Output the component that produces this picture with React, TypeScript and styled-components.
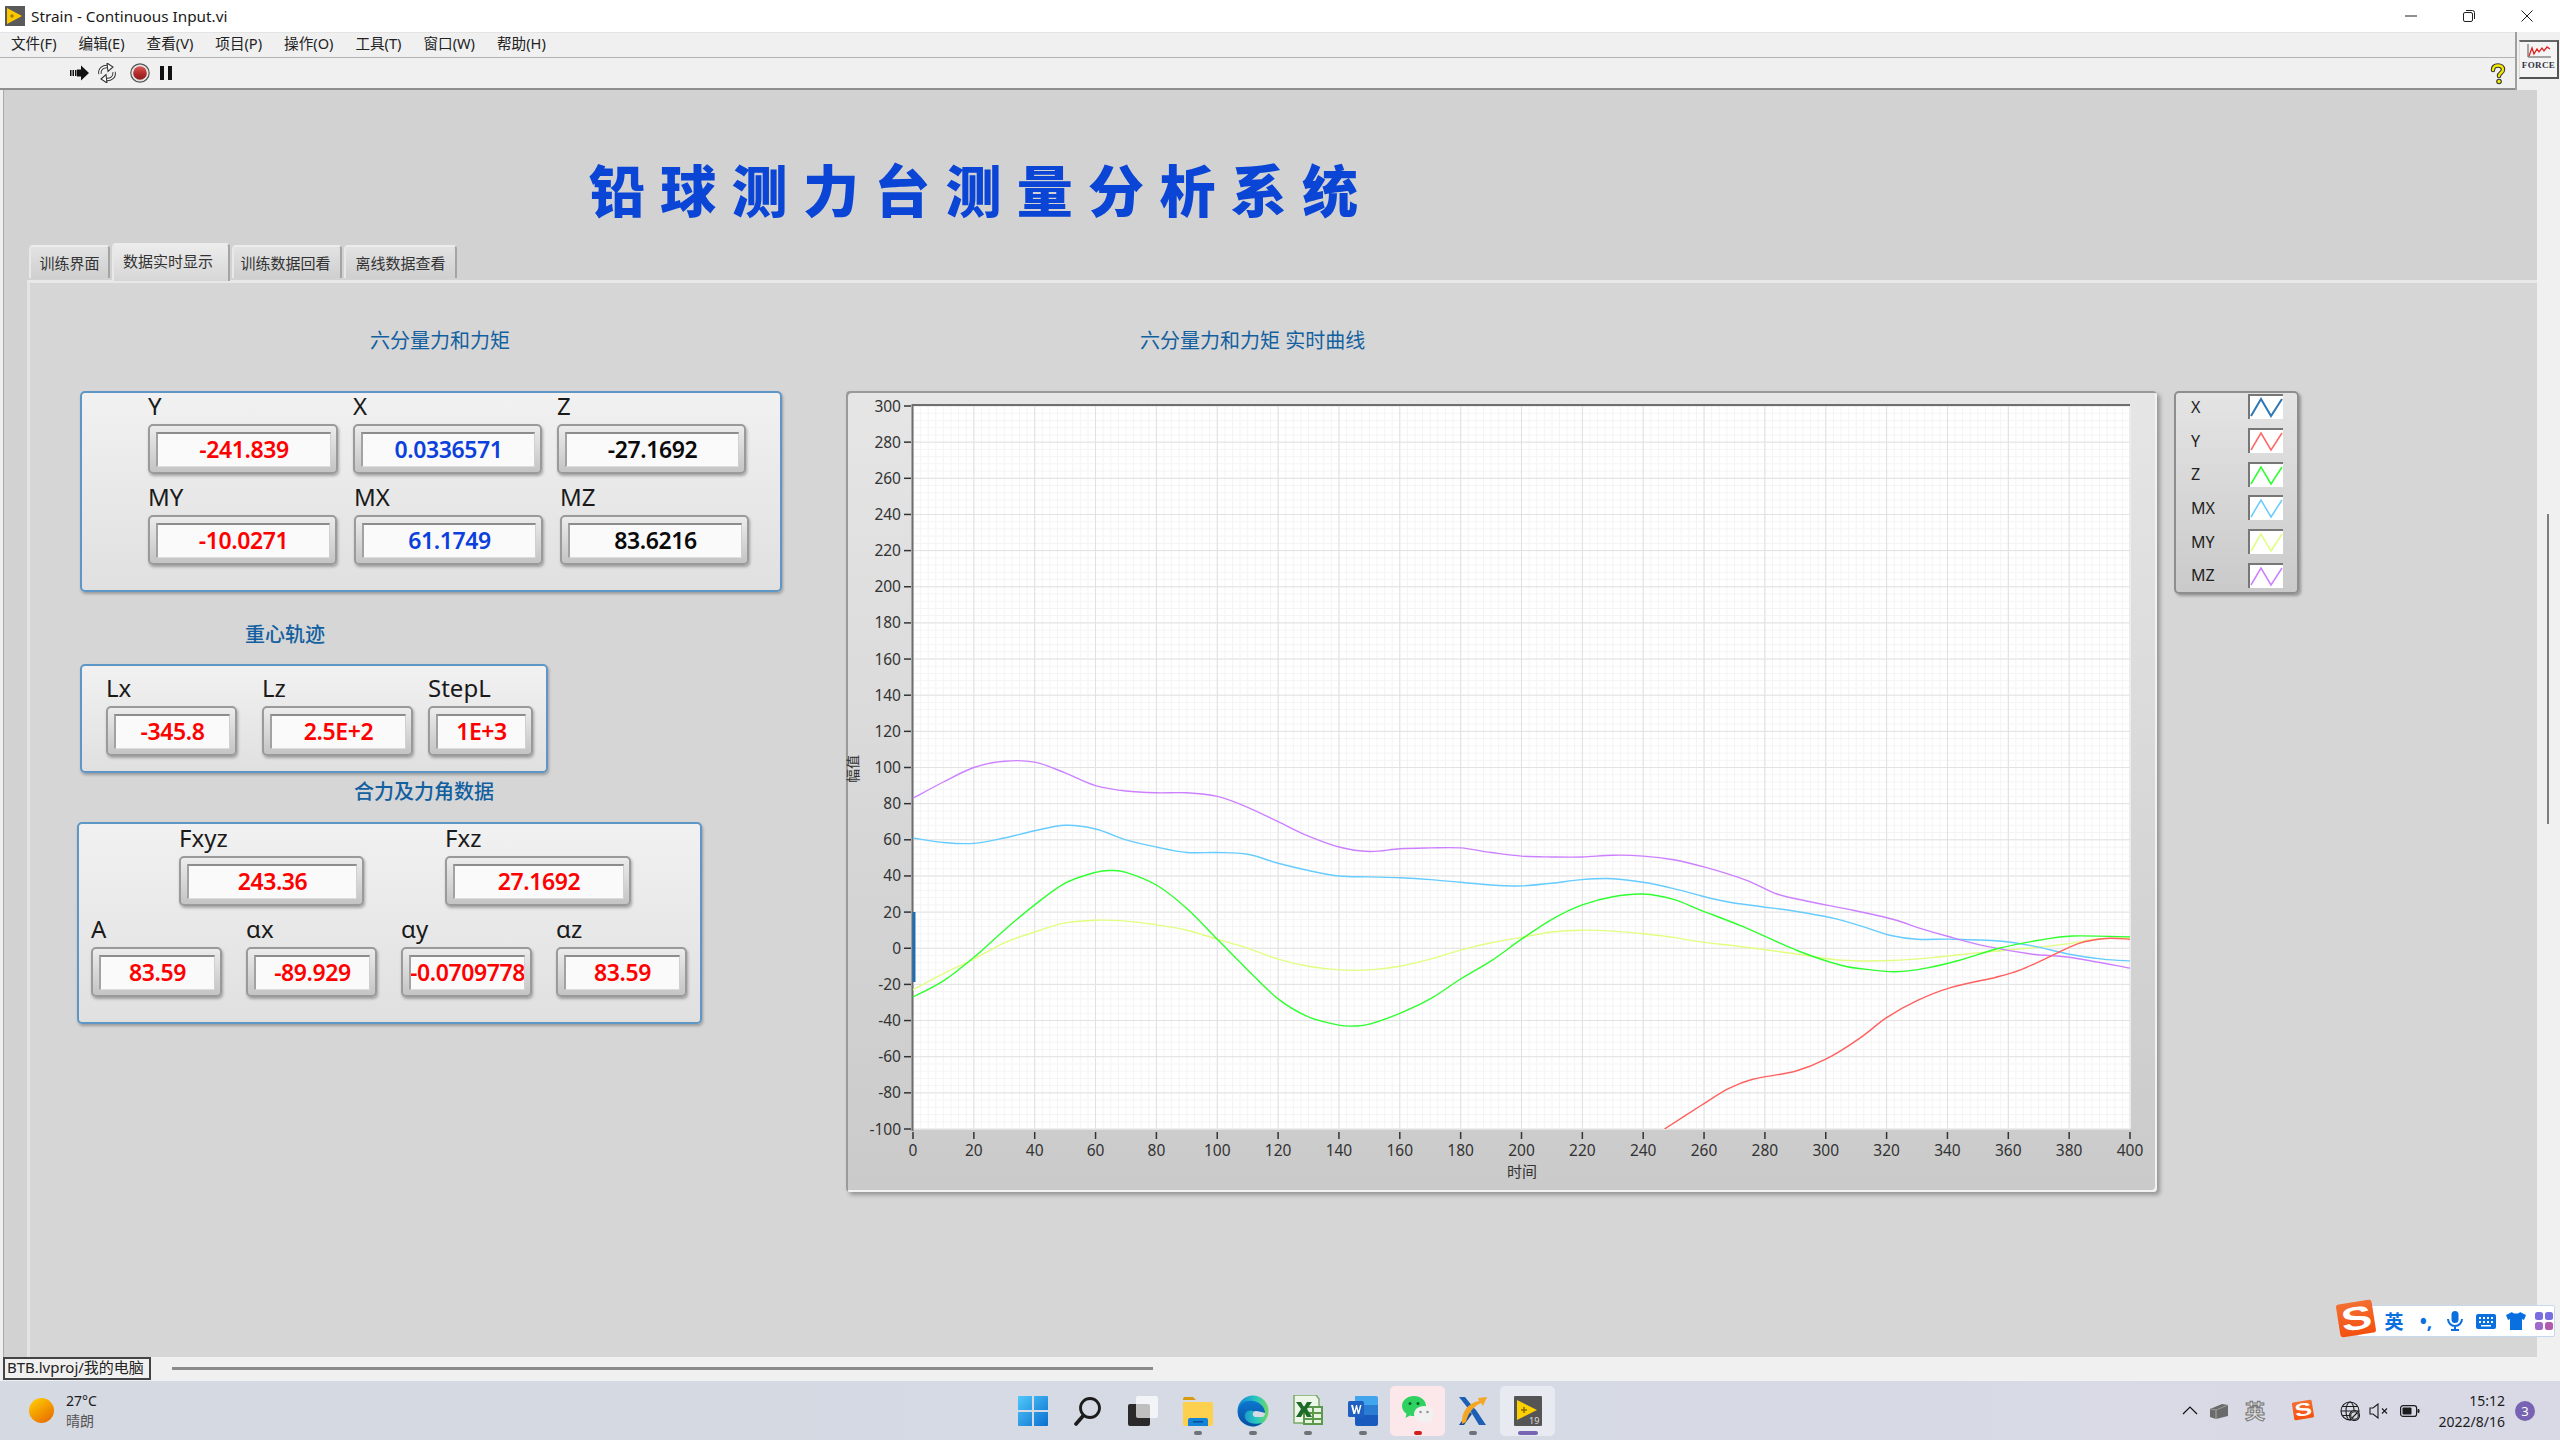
import React from 'react'
import styled, { createGlobalStyle } from 'styled-components'

const GlobalStyle = createGlobalStyle`
  html, body {
    margin: 0;
    padding: 0;
    background: #f0f0f0;
  }
  body {
    font-family: "Noto Sans", "Noto Sans CJK SC", sans-serif;
    color: #111;
  }
  * {
    box-sizing: border-box;
  }
`

const Screen = styled.div`
  width: 2560px;
  height: 1440px;
  position: relative;
  display: flex;
  flex-direction: column;
  overflow: hidden;
`

/* window chrome */

const TitleBar = styled.div`
  height: 32px;
  flex: none;
  display: flex;
  align-items: center;
  padding-left: 5px;
  background: #fff;
`

const TitleText = styled.div`
  margin-left: 6px;
  font-size: 15.3px;
  color: #1a1a1a;
`

const WindowButtons = styled.div`
  margin-left: auto;
  display: flex;
  padding-right: 4px;
`

const WindowButton = styled.div`
  width: 58px;
  height: 28px;
  display: flex;
  align-items: center;
  justify-content: center;
`

const MenuBar = styled.div`
  height: 26px;
  flex: none;
  display: flex;
  align-items: center;
  gap: 22px;
  padding: 0 0 6px 11px;
  background: #f0f0f0;
  border-bottom: 1px solid #b4b4b4;
  border-top: 1px solid #e4e4e4;
  position: relative;
`

const MenuItem = styled.span`
  font-size: 14.6px;
  color: #222;
`

const ToolBar = styled.div`
  height: 32px;
  flex: none;
  display: flex;
  align-items: center;
  padding-left: 70px;
  gap: 8px;
  background: #f0f0f0;
  border-bottom: 2px solid #8e8e8e;
`

const ToolIcon = styled.svg`
  display: block;
  flex: none;
`

const HelpMark = styled.svg`
  margin-left: auto;
  margin-right: 53px;
  margin-top: 2px;
  flex: none;
`

const ForceBox = styled.div`
  position: absolute;
  left: 2515px;
  top: 32px;
  width: 45px;
  height: 58px;
  background: #f0f0f0;
  border-left: 2px solid #a0a0a0;
  padding: 8px 3px 0 2px;
`

const ForceFrame = styled.div`
  width: 40px;
  height: 39px;
  border: 1px solid #ddd;
  border-right: 2px solid #555;
  border-bottom: 2px solid #555;
  border-top: 2px solid #666;
  background: #f4f4f4;
  display: flex;
  flex-direction: column;
  align-items: center;
`

const ForceText = styled.span`
  font-family: "Liberation Serif", serif;
  font-weight: 700;
  font-size: 9px;
  letter-spacing: 0.4px;
  line-height: 11px;
  color: #334;
`

/* front panel */

const Workspace = styled.div`
  flex: 1;
  min-height: 0;
  display: flex;
`

const FrontPanel = styled.div`
  flex: 1;
  min-width: 0;
  margin-left: 3px;
  border-left: 1px solid #aaa;
  background: #d2d2d2;
  display: flex;
  flex-direction: column;
`

const ScrollColumn = styled.div`
  width: 23px;
  flex: none;
  background: #f0f0f0;
  padding: 424px 0 0 10px;
`

const ScrollThumb = styled.div`
  width: 2px;
  height: 310px;
  background: #7e7e7e;
`

const MainTitle = styled.h1`
  margin: 70px 0 0 585px;
  height: 56px;
  font-family: "Noto Sans CJK SC", sans-serif;
  font-weight: 900;
  font-size: 56px;
  line-height: 56px;
  letter-spacing: 15.3px;
  color: #0a45d6;
  white-space: nowrap;
`

const TabStrip = styled.div`
  height: 38px;
  margin: 27px 0 0 25px;
  display: flex;
  align-items: flex-start;
  position: relative;
  z-index: 1;
`

const Tab = styled.div<{ $active?: boolean; $width: number; $nudge?: number }>`
  width: ${({ $width }) => $width}px;
  height: ${({ $active }) => ($active ? 38 : 33)}px;
  margin-top: ${({ $active }) => ($active ? 0 : 2)}px;
  margin-right: 2px;
  display: flex;
  align-items: center;
  justify-content: center;
  padding-bottom: ${({ $active }) => ($active ? 6 : 0)}px;
  padding-right: ${({ $nudge }) => $nudge ?? 0}px;
  font-size: 15px;
  color: #333;
  background: ${({ $active }) =>
    $active
      ? 'linear-gradient(#ececec, #d6d6d6)'
      : 'linear-gradient(#e2e2e2, #cfcfcf)'};
  border-top: 2px solid #ececec;
  border-left: 2px solid #e8e8e8;
  border-right: 2px solid #a4a4a4;
  border-radius: 4px 4px 0 0;
`

const TabPane = styled.div`
  flex: 1;
  min-height: 0;
  margin: -1px 0 0 23px;
  border-top: 3px solid #e8e8e8;
  border-left: 3px solid #e4e4e4;
  background: #d6d6d6;
  display: flex;
`

const LeftColumn = styled.div`
  width: 816px;
  flex: none;
`

const RightColumn = styled.div`
  flex: 1;
  min-width: 0;
`

const SectionHeading = styled.div<{ $left: number; $top: number; $bold?: boolean }>`
  margin: ${({ $top }) => $top}px 0 0 ${({ $left }) => $left}px;
  height: 28px;
  line-height: 28px;
  font-size: 20px;
  font-weight: ${({ $bold }) => ($bold ? 500 : 400)};
  color: #12609f;
  white-space: nowrap;
`

const GroupPanel = styled.div<{ $left: number; $top: number; $width: number; $height: number; $pad: number }>`
  width: ${({ $width }) => $width}px;
  height: ${({ $height }) => $height}px;
  margin: ${({ $top }) => $top}px 0 0 ${({ $left }) => $left}px;
  padding-top: ${({ $pad }) => $pad}px;
  border: 2px solid #5e96c6;
  border-radius: 5px;
  background: linear-gradient(#f1f1f1, #e0e0e0);
  box-shadow: 1px 2px 3px rgba(0, 0, 0, 0.28);
`

const FieldRow = styled.div<{ $left: number; $gap?: number }>`
  display: flex;
  padding-left: ${({ $left }) => $left}px;
  gap: ${({ $gap }) => $gap ?? 0}px;
  margin-bottom: 10px;
`

const Field = styled.div<{ $width: number; $after?: number }>`
  width: ${({ $width }) => $width}px;
  margin-right: ${({ $after }) => $after ?? 0}px;
  flex: none;
`

const FieldLabel = styled.div`
  height: 26px;
  line-height: 26px;
  margin-bottom: 5px;
  font-size: 24px;
  color: #1a1a1a;
  white-space: nowrap;
`

const FieldFrame = styled.div`
  height: 50px;
  padding: 6px 5px 5px 6px;
  border: 2px solid #9a9a9a;
  border-radius: 5px;
  background: linear-gradient(#ececec, #c4c4c4);
  box-shadow: 1px 2px 3px rgba(0, 0, 0, 0.3);
`

const FieldValue = styled.div<{ $color: string }>`
  height: 100%;
  display: flex;
  align-items: center;
  justify-content: center;
  padding-bottom: 3px;
  overflow: hidden;
  white-space: nowrap;
  font-size: 23px;
  font-weight: 600;
  letter-spacing: -0.4px;
  color: ${({ $color }) => $color};
  background: #fafafa;
  border-top: 2px solid #8c8c8c;
  border-left: 2px solid #a2a2a2;
  border-bottom: 1px solid #dcdcdc;
  border-right: 1px solid #d0d0d0;
`

const ChartRow = styled.div`
  display: flex;
  margin: 36px 0 0 0;
`

const GraphFrame = styled.div`
  width: 1311px;
  height: 801px;
  flex: none;
  border-radius: 4px;
  background: linear-gradient(#e6e6e6, #cacaca);
  box-shadow: inset 2px 2px 0 #9a9a9a, inset -2px -2px 0 #f2f2f2, 3px 3px 4px rgba(0, 0, 0, 0.3);
`

const GraphSvg = styled.svg`
  display: block;
`

const Legend = styled.div`
  width: 125px;
  height: 203px;
  margin-left: 17px;
  padding: 0 14px 0 15px;
  border: 2px solid #8e8e8e;
  border-radius: 5px;
  background: linear-gradient(#e4e4e4, #cacaca);
  box-shadow: 2px 2px 3px rgba(0, 0, 0, 0.3);
`

const LegendRow = styled.div`
  height: 33.7px;
  display: flex;
  align-items: center;
  justify-content: space-between;
  font-size: 16px;
  color: #222;

  &:first-child {
    margin-top: -3px;
  }
`

const LegendSwatch = styled.svg`
  width: 35px;
  height: 25px;
  background: #fff;
  border-top: 2px solid #777;
  border-left: 2px solid #777;
`

/* status bar and taskbar */

const StatusBar = styled.div`
  height: 23px;
  flex: none;
  display: flex;
  align-items: center;
  padding-left: 3px;
  background: #f0f0f0;
`

const PathBox = styled.div`
  width: 148px;
  height: 23px;
  border: 2px solid #444;
  font-size: 15px;
  line-height: 17px;
  padding-left: 2px;
  white-space: nowrap;
  overflow: hidden;
  color: #222;
`

const ProgressLine = styled.div`
  width: 981px;
  height: 3px;
  margin-left: 21px;
  background: #8a8a8a;
`

const Taskbar = styled.div`
  height: 60px;
  flex: none;
  display: grid;
  grid-template-columns: 1fr auto 1fr;
  align-items: center;
  background: linear-gradient(90deg, #d5d9e2, #d6dae4 60%, #d9d9e6);
  border-top: 1px solid #eef0f4;
`

const Weather = styled.div`
  display: flex;
  align-items: center;
  padding-left: 29px;
  gap: 12px;
`

const Sun = styled.div`
  width: 25px;
  height: 25px;
  border-radius: 50%;
  background: linear-gradient(145deg, #ffd400, #e86200);
`

const WeatherText = styled.div`
  font-size: 14px;
  line-height: 20px;
  color: #1c1c1c;
  & > span {
    display: block;
    color: #555;
  }
`

const Dock = styled.div`
  display: flex;
`

const DockItem = styled.div<{ $tint?: string }>`
  width: 55px;
  height: 50px;
  position: relative;
  display: flex;
  align-items: center;
  justify-content: center;
  border-radius: 5px;
  background: ${({ $tint }) => $tint ?? 'transparent'};
`

const DockMark = styled.i<{ $color?: string; $wide?: boolean }>`
  position: absolute;
  left: 50%;
  bottom: 1px;
  width: ${({ $wide }) => ($wide ? 20 : 8)}px;
  height: 4px;
  margin-left: ${({ $wide }) => ($wide ? -10 : -4)}px;
  border-radius: 2px;
  background: ${({ $color }) => $color ?? '#6f7378'};
`

const Tray = styled.div`
  display: flex;
  align-items: center;
  justify-content: flex-end;
  padding-right: 25px;
`

const TrayItem = styled.div<{ $width: number; $before?: number }>`
  width: ${({ $width }) => $width}px;
  margin-left: ${({ $before }) => $before ?? 0}px;
  display: flex;
  justify-content: center;
  align-items: center;
  flex: none;
`

const TrayLang = styled.span`
  font-size: 20px;
  font-weight: 700;
  color: #dedede;
  -webkit-text-stroke: 1px #777;
`

const Clock = styled.div`
  width: 74px;
  text-align: right;
  font-size: 14px;
  line-height: 21px;
  color: #1c1c1c;
  white-space: nowrap;
  display: flex;
  flex-direction: column;
  align-items: flex-end;
`

const Badge = styled.div`
  width: 20px;
  height: 20px;
  margin-left: 10px;
  border-radius: 50%;
  background: #7763b2;
  color: #fff;
  font-size: 13px;
  line-height: 20px;
  text-align: center;
`

const SogouMark = styled.div<{ $size: number }>`
  width: ${({ $size }) => $size}px;
  height: ${({ $size }) => $size * 0.92}px;
  flex: none;
  transform: rotate(-9deg);
  border-radius: ${({ $size }) => $size * 0.08}px;
  background: linear-gradient(#f36f32, #f4500f);
  color: #fff;
  font-family: "Liberation Sans", sans-serif;
  font-weight: 700;
  font-size: ${({ $size }) => $size * 0.95}px;
  line-height: ${({ $size }) => $size * 0.92}px;
  text-align: center;

  & > span {
    display: inline-block;
    transform: scale(1.35, 0.95);
  }
`

const ImeBar = styled.div`
  position: absolute;
  left: 2338px;
  top: 1300px;
  display: flex;
  align-items: center;
`

const ImeStrip = styled.div`
  width: 198px;
  height: 32px;
  margin: 5px 0 0 -17px;
  padding-left: 19px;
  display: flex;
  align-items: center;
  background: #fff;
  border: 1px solid #c6d8ee;
  border-radius: 2px;
`

const ImeSlot = styled.div<{ $width: number }>`
  width: ${({ $width }) => $width}px;
  flex: none;
  display: flex;
  justify-content: center;
  align-items: center;
  font-size: 19px;
  font-weight: 700;
  color: #0a70e0;
`

/* chart data */

type Point = [number, number]

const toX = (t: number) => 913 + t * 3.0425
const toY = (v: number) => 406 + (300 - v) * 1.8075

const smoothPath = (points: Point[]) => {
  const p = points.map(([t, v]): Point => [toX(t), toY(v)])
  let d = `M${p[0][0].toFixed(1)} ${p[0][1].toFixed(1)}`
  for (let i = 0; i < p.length - 1; i++) {
    const a = p[Math.max(i - 1, 0)]
    const b = p[i]
    const c = p[i + 1]
    const e = p[Math.min(i + 2, p.length - 1)]
    const c1x = b[0] + (c[0] - a[0]) / 6
    const c1y = b[1] + (c[1] - a[1]) / 6
    const c2x = c[0] - (e[0] - b[0]) / 6
    const c2y = c[1] - (e[1] - b[1]) / 6
    d += `C${c1x.toFixed(1)} ${c1y.toFixed(1)} ${c2x.toFixed(1)} ${c2y.toFixed(1)} ${c[0].toFixed(1)} ${c[1].toFixed(1)}`
  }
  return d
}

const mzCurve: Point[] = [
  [0, 83], [10, 92], [20, 100], [30, 103.5], [40, 103], [50, 97], [60, 90], [70, 87], [80, 86], [90, 86],
  [100, 84], [110, 78], [120, 70], [130, 62], [140, 56], [150, 53.5], [160, 55], [170, 55.5], [180, 55.5],
  [190, 53], [200, 51], [210, 50.5], [220, 50.5], [230, 51.5], [240, 51], [250, 49], [260, 45], [274, 37.6],
  [284, 30], [294, 26], [309, 21], [322, 16], [331, 11], [340, 6.6], [353, 1], [368, -3.3], [380, -5], [400, -11],
]

const mxCurve: Point[] = [
  [0, 61], [10, 58.5], [20, 58], [30, 61], [40, 65], [50, 68], [60, 66], [70, 60], [80, 56], [90, 53], [100, 53],
  [110, 52], [120, 47], [130, 43], [140, 40], [150, 39.5], [160, 39], [170, 38], [180, 36.5], [190, 35], [200, 34.5],
  [210, 36], [220, 38], [230, 38.5], [240, 36.5], [250, 33], [259, 29], [268, 25.6], [279, 23], [289, 20.7],
  [303, 16.4], [314, 11], [321, 7.2], [330, 5], [342, 5], [357, 4], [368, 1.3], [380, -3.3], [391, -6], [400, -7],
]

const zCurve: Point[] = [
  [0, -27], [10, -18], [20, -5], [30, 10], [40, 24], [50, 36], [60, 42], [65, 43], [70, 42], [80, 35], [90, 22],
  [100, 5], [110, -12], [120, -28], [130, -38], [140, -42.5], [145, -43], [150, -42], [160, -36], [170, -28],
  [180, -17], [190, -7], [200, 5], [210, 16], [220, 24], [230, 28.5], [240, 30], [250, 27], [259, 21], [273, 11.8],
  [291, -1.5], [305, -9.4], [315, -12], [323, -13], [333, -11], [344, -6.6], [357, 0], [370, 4.4], [381, 6.8], [400, 6.3],
]

const myCurve: Point[] = [
  [0, -23], [10, -14], [20, -6], [30, 3], [40, 9], [50, 14], [60, 15.5], [70, 15], [80, 13], [90, 10], [100, 5],
  [110, 0], [120, -6], [130, -10], [140, -12], [150, -12], [160, -10], [170, -6], [180, -1], [190, 3], [200, 6],
  [210, 9], [220, 10], [230, 9.5], [240, 8], [250, 6], [259, 3.5], [273, 0.7], [291, -3.3], [305, -6.6], [322, -6.8],
  [335, -5.2], [353, -2], [368, 0.2], [380, 2.6], [389, 5], [400, 5.7],
]

const yCurve: Point[] = [
  [247, -100], [259, -87], [268, -77.7], [276, -72.5], [290, -68], [300, -61.4], [311, -50], [320, -38.4], [330, -29],
  [341, -21.8], [356, -16], [364, -12], [374, -4.4], [383, 2.6], [392, 5.4], [400, 5],
]

const curves = [
  { color: '#e0ff80', points: myCurve },
  { color: '#66ccff', points: mxCurve },
  { color: '#cc80ff', points: mzCurve },
  { color: '#2eff2e', points: zCurve },
  { color: '#ff6060', points: yCurve },
]

const legendItems = [
  { name: 'X', color: '#2f77b4', width: 2 },
  { name: 'Y', color: '#ff6666', width: 1.5 },
  { name: 'Z', color: '#2eff2e', width: 1.5 },
  { name: 'MX', color: '#66ccff', width: 1.5 },
  { name: 'MY', color: '#e0ff80', width: 1.5 },
  { name: 'MZ', color: '#cc80ff', width: 1.5 },
]

const range = (from: number, to: number, step: number) => {
  const out: number[] = []
  for (let n = from; n <= to + 0.001; n += step) out.push(n)
  return out
}

const Graph = () => {
  const right = toX(400)
  const bottom = toY(-100)
  return (
    <GraphSvg width={1311} height={801} viewBox="846 391 1311 801">
      <rect x={913} y={406} width={right - 913 + 1} height={bottom - 406} fill="#ffffff" />
      {range(0, 400, 2.5).map(t => (
        <line key={t} x1={toX(t)} x2={toX(t)} y1={406} y2={bottom} stroke="#f4f4f4" strokeWidth={1} />
      ))}
      {range(-100, 300, 4).map(v => (
        <line key={v} x1={913} x2={right} y1={toY(v)} y2={toY(v)} stroke="#f4f4f4" strokeWidth={1} />
      ))}
      {range(0, 400, 20).map(t => (
        <line key={t} x1={toX(t)} x2={toX(t)} y1={406} y2={bottom} stroke="#e0e0e0" strokeWidth={1} />
      ))}
      {range(-100, 300, 20).map(v => (
        <line key={v} x1={913} x2={right} y1={toY(v)} y2={toY(v)} stroke="#e2e2e2" strokeWidth={1} />
      ))}
      <path d="M912.5 1131V405H2130" fill="none" stroke="#6e6e6e" strokeWidth={2} />
      {range(-100, 300, 20).map(v => (
        <g key={v}>
          <line x1={904} x2={911} y1={toY(v)} y2={toY(v)} stroke="#333" strokeWidth={1.5} />
          <text x={901} y={toY(v) + 5.5} textAnchor="end" fontSize={15.5} fill="#333" fontFamily="Noto Sans">
            {v}
          </text>
        </g>
      ))}
      {range(0, 400, 20).map(t => (
        <g key={t}>
          <line x1={toX(t)} x2={toX(t)} y1={1132} y2={1139} stroke="#333" strokeWidth={1.5} />
          <text x={toX(t)} y={1155.5} textAnchor="middle" fontSize={15.5} fill="#333" fontFamily="Noto Sans">
            {t}
          </text>
        </g>
      ))}
      <text x={1522} y={1177} textAnchor="middle" fontSize={15} fill="#333" fontFamily="Noto Sans CJK SC">
        时间
      </text>
      <text
        x={858}
        y={769}
        transform="rotate(-90 858 769)"
        textAnchor="middle"
        fontSize={14}
        fill="#333"
        fontFamily="Noto Sans CJK SC"
      >
        幅值
      </text>
      <clipPath id="plot-area">
        <rect x={912} y={406} width={right - 911} height={bottom - 406} />
      </clipPath>
      <g clipPath="url(#plot-area)">
        <path d="M914 912V982" stroke="#1f6fb0" strokeWidth={3} fill="none" />
        {curves.map(c => (
          <path key={c.color} d={smoothPath(c.points)} fill="none" stroke={c.color} strokeWidth={1.4} />
        ))}
      </g>
    </GraphSvg>
  )
}

/* small icons */

const TitleLogo = () => (
  <svg width="20" height="20" viewBox="0 0 20 20">
    <rect width="20" height="20" fill="#5a5a5a" />
    <path d="M2 2l15 8-15 8z" fill="#fbc800" />
    <path d="M5 10h4M7 8v4" stroke="#8a6a00" strokeWidth="1" />
  </svg>
)

const MinimizeIcon = () => (
  <svg width="12" height="12" viewBox="0 0 12 12">
    <path d="M0 6h12" stroke="#222" strokeWidth="1" />
  </svg>
)

const RestoreIcon = () => (
  <svg width="12" height="12" viewBox="0 0 12 12" fill="none" stroke="#222" strokeWidth="1">
    <rect x="0.5" y="2.5" width="9" height="9" rx="1.5" />
    <path d="M3 0.5h6.5a2 2 0 0 1 2 2V9" />
  </svg>
)

const CloseIcon = () => (
  <svg width="12" height="12" viewBox="0 0 12 12">
    <path d="M0.5 0.5l11 11M11.5 0.5l-11 11" stroke="#222" strokeWidth="1" />
  </svg>
)

const RunArrow = () => (
  <ToolIcon width="19" height="16" viewBox="0 0 19 16">
    <path d="M0 5h1.500v6H0zM2.500 5H4v6H2.500zM5 5h1.500v6H5z" fill="#111" />
    <path d="M7 4.500h4V0.500L19 8l-8 7.500v-4H7z" fill="#111" />
  </ToolIcon>
)

const RepeatArrow = () => (
  <ToolIcon width="20" height="20" viewBox="0 0 20 20" fill="none">
    <path d="M3 11C2 6 6 3 11 3.500" stroke="#333" strokeWidth="3.400" />
    <path d="M3 11C2 6 6 3 11 3.500" stroke="#fff" strokeWidth="1.400" />
    <path d="M10 0l6 4-5 4.500z" fill="#fff" stroke="#333" strokeWidth="1.100" />
    <path d="M17 9C18 14 14 17 9 16.500" stroke="#333" strokeWidth="3.400" />
    <path d="M17 9C18 14 14 17 9 16.500" stroke="#fff" strokeWidth="1.400" />
    <path d="M10 20l-6-4 5-4.500z" fill="#fff" stroke="#333" strokeWidth="1.100" />
  </ToolIcon>
)

const StopButton = () => (
  <ToolIcon width="20" height="20" viewBox="0 0 20 20" style={{ marginLeft: 5 }}>
    <defs>
      <linearGradient id="stop-fill" x1="0" y1="0" x2="0" y2="1">
        <stop offset="0" stopColor="#d85a5a" />
        <stop offset="0.5" stopColor="#b82c2c" />
        <stop offset="1" stopColor="#8a1c1c" />
      </linearGradient>
    </defs>
    <circle cx="10" cy="10" r="9.200" fill="#e4e4e4" stroke="#555" strokeWidth="1.200" />
    <circle cx="10" cy="10" r="6.800" fill="url(#stop-fill)" />
  </ToolIcon>
)

const PauseButton = () => (
  <ToolIcon width="12" height="14" viewBox="0 0 12 14" style={{ marginLeft: 2 }}>
    <path d="M0 0h4v14H0zM8 0h4v14H8z" fill="#111" />
  </ToolIcon>
)

const HelpIcon = () => (
  <HelpMark width="18" height="22" viewBox="0 0 18 22">
    <path
      d="M4 7c0-3 2-4.500 5-4.500s5 1.500 5 4c0 3.500-4 3.500-4 6.500"
      fill="none"
      stroke="#333"
      strokeWidth="4.500"
      strokeLinecap="round"
    />
    <circle cx="10" cy="18.500" r="2.800" fill="#333" />
    <path
      d="M4 7c0-3 2-4.500 5-4.500s5 1.500 5 4c0 3.500-4 3.500-4 6.500"
      fill="none"
      stroke="#f5e800"
      strokeWidth="2.400"
      strokeLinecap="round"
    />
    <circle cx="10" cy="18.500" r="1.700" fill="#f5e800" />
  </HelpMark>
)

const ForceChart = () => (
  <svg width="26" height="16" viewBox="0 0 26 16" style={{ marginTop: 2 }}>
    <path d="M2 0v13h23" fill="none" stroke="#555" strokeWidth="1" />
    <path d="M3 12l3-8 2 6 3-5 2 3 3-4 2 3 3-4 3 2" fill="none" stroke="#e02020" strokeWidth="1.300" />
  </svg>
)

const WindowsLogo = () => (
  <svg width="30" height="30" viewBox="0 0 30 30">
    <defs>
      <linearGradient id="win-fill" x1="0" y1="0" x2="1" y2="1">
        <stop offset="0" stopColor="#4fc8fa" />
        <stop offset="1" stopColor="#0a6fd0" />
      </linearGradient>
    </defs>
    <path d="M0 1a1 1 0 0 1 1-1h13v14H0zM16 0h13a1 1 0 0 1 1 1v13H16zM0 16h14v14H1a1 1 0 0 1-1-1zM16 16h14v13a1 1 0 0 1-1 1H16z" fill="url(#win-fill)" />
  </svg>
)

const SearchGlass = () => (
  <svg width="28" height="30" viewBox="0 0 28 30" fill="none" stroke="#1c1c1c">
    <circle cx="16" cy="12" r="9.500" strokeWidth="2.800" />
    <path d="M9 20L2 28" strokeWidth="3.600" strokeLinecap="round" />
  </svg>
)

const TaskView = () => (
  <svg width="30" height="30" viewBox="0 0 30 30">
    <rect x="0" y="8" width="22" height="22" rx="2" fill="#2a2a2a" />
    <rect x="8" y="0" width="22" height="22" rx="2" fill="#fff" fillOpacity="0.7" />
  </svg>
)

const FolderIcon = () => (
  <svg width="30" height="30" viewBox="0 0 30 30">
    <path d="M0 3a2 2 0 0 1 2-2h8l3 3h-13z" fill="#d89a0e" />
    <path d="M0 6h28a2 2 0 0 1 2 2v20a2 2 0 0 1-2 2H2a2 2 0 0 1-2-2z" fill="#fdd14f" />
    <path d="M5 30v-6a2 2 0 0 1 2-2h16a2 2 0 0 1 2 2v6z" fill="#1283d6" />
    <rect x="10" y="25" width="10" height="1.500" fill="#0a4d90" />
  </svg>
)

const EdgeIcon = () => (
  <svg width="32" height="32" viewBox="0 0 32 32">
    <defs>
      <linearGradient id="edge-a" x1="0" y1="0" x2="1" y2="0">
        <stop offset="0" stopColor="#1180d6" />
        <stop offset="0.6" stopColor="#28c8c0" />
        <stop offset="1" stopColor="#6fd860" />
      </linearGradient>
      <linearGradient id="edge-b" x1="0" y1="0" x2="0" y2="1">
        <stop offset="0" stopColor="#0c78cf" />
        <stop offset="1" stopColor="#0a4da2" />
      </linearGradient>
    </defs>
    <circle cx="16" cy="16" r="15.500" fill="url(#edge-a)" />
    <path d="M1 16C2 8 9 5 16 6c7 1 12 6 12 12h-9c-2-3-9-4-11 1-2 6 5 12 17 9-4 3-8 4-12 3C5 29 0 23 1 16z" fill="url(#edge-b)" />
    <path d="M18 22c-3-1-3-6 1-6 3 0 5 1 9 2 0 2-1 4-3 4h-7z" fill="#d6dae4" />
  </svg>
)

const ExcelIcon = () => (
  <svg width="30" height="32" viewBox="0 0 30 32">
    <path d="M1 0h22l3 4v24H1z" fill="#eef6ea" stroke="#78a868" strokeWidth="1.500" />
    <path d="M10 11h20v19H10z" fill="#5a9a4a" />
    <path d="M12 13h7v4h-7zM21 13h7v4h-7zM12 19h7v4h-7zM21 19h7v4h-7zM12 25h7v3h-7zM21 25h7v3h-7z" fill="#e8f2e2" />
    <path d="M3 7l5 0 3 5 3-5h5l-5 7 5 8h-5l-3-5-3 5H3l5-8z" fill="#1e6a28" />
  </svg>
)

const WordIcon = () => (
  <svg width="30" height="30" viewBox="0 0 30 30">
    <path d="M7 0h21a2 2 0 0 1 2 2v7H7z" fill="#41a5ee" />
    <path d="M7 9h23v10H7z" fill="#2b7cd3" />
    <path d="M7 19h23v9a2 2 0 0 1-2 2H9a2 2 0 0 1-2-2z" fill="#185abd" />
    <rect x="0" y="5" width="16" height="16" rx="1.500" fill="#1e5fbf" />
    <path d="M3 9h2l1.500 6L8 9h1l1.500 6L12 9h1.500l-2.300 9H9.800L8.500 12.500 7.200 18H5.300z" fill="#fff" />
  </svg>
)

const WechatIcon = () => (
  <svg width="32" height="30" viewBox="0 0 32 30">
    <path d="M12 0c7 0 12 4.500 12 10S19 20 12 20c-1.500 0-2.800-.2-4-.6L3.500 22l1-4.200C1.700 15.800 0 13 0 10 0 4.500 5 0 12 0z" fill="#2fd161" />
    <circle cx="8" cy="7.500" r="1.500" fill="#0b5f2a" />
    <circle cx="16" cy="7.500" r="1.500" fill="#0b5f2a" />
    <path d="M22 10c5.500 0 10 3.700 10 8.200 0 2.500-1.400 4.800-3.500 6.300l.8 3.500-3.700-2c-1.100.3-2.400.5-3.600.5-5.500 0-10-3.700-10-8.300S16.500 10 22 10z" fill="#f1f1f1" />
    <circle cx="18.500" cy="16" r="1.200" fill="#8f8f8f" />
    <circle cx="25.500" cy="16" r="1.200" fill="#8f8f8f" />
  </svg>
)

const XArrowIcon = () => (
  <svg width="30" height="30" viewBox="0 0 30 30">
    <path d="M1 1h6l8 10 3 3 10 15h-7L13 16z" fill="#1d5fb4" />
    <path d="M1 29h5l8-11-3-3z" fill="#174a96" />
    <path d="M4 28C3 16 10 7 21 5l-1-3 9-1-4 9-2-3C16 10 10 17 8 26z" fill="#f5a623" />
  </svg>
)

const LabviewIcon = () => (
  <svg width="28" height="30" viewBox="0 0 28 30">
    <rect width="28" height="30" rx="1" fill="#555" />
    <path d="M3 4l20 10L3 24z" fill="#fbcf00" />
    <path d="M7 14h6M10 11v6" stroke="#8a6a00" strokeWidth="1.500" />
    <text x="15" y="28" fontSize="9" fill="#ddd" fontFamily="Noto Sans">19</text>
  </svg>
)

const ChevronUp = () => (
  <svg width="16" height="9" viewBox="0 0 16 9">
    <path d="M1 8l7-7 7 7" fill="none" stroke="#111" strokeWidth="1.200" />
  </svg>
)

const CaseIcon = () => (
  <svg width="18" height="16" viewBox="0 0 18 16">
    <path d="M0 6l12-5 6 1v11L6 16l-6-2z" fill="#6a6a6a" />
    <path d="M6 6.500v9.500" stroke="#aaa" strokeWidth="1" />
    <path d="M0 6l6 1 12-5" fill="none" stroke="#999" strokeWidth="1" />
  </svg>
)

const GlobeBlocked = () => (
  <svg width="20" height="20" viewBox="0 0 20 20" fill="none" stroke="#1c1c1c" strokeWidth="1.100">
    <circle cx="10" cy="10" r="9" />
    <ellipse cx="10" cy="10" rx="4" ry="9" />
    <path d="M1 10h18M2.500 5.500h15M2.500 14.500h15" />
    <circle cx="14.500" cy="14.500" r="5" fill="#d6dae4" />
    <circle cx="14.500" cy="14.500" r="3.800" />
    <path d="M12 17l5-5" />
  </svg>
)

const MutedSpeaker = () => (
  <svg width="20" height="16" viewBox="0 0 20 16" fill="none" stroke="#1c1c1c" strokeWidth="1.100">
    <path d="M1 5h3l5-4v14l-5-4H1z" />
    <path d="M13 5.500l5 5M18 5.500l-5 5" />
  </svg>
)

const BatteryIcon = () => (
  <svg width="20" height="12" viewBox="0 0 20 12">
    <rect x="0.600" y="0.600" width="16" height="10.800" rx="2.500" fill="none" stroke="#1c1c1c" strokeWidth="1.200" />
    <rect x="2.500" y="2.500" width="9" height="7" rx="1" fill="#1c1c1c" />
    <rect x="17.500" y="4" width="2" height="4" rx="1" fill="#1c1c1c" />
  </svg>
)

const MicIcon = () => (
  <svg width="16" height="20" viewBox="0 0 16 20" fill="none" stroke="#0a70e0" strokeWidth="2">
    <rect x="4.500" y="0" width="7" height="12" rx="3.500" fill="#0a70e0" stroke="none" />
    <path d="M1 8a7 7 0 0 0 14 0M8 15v4M4 19h8" />
  </svg>
)

const KeyboardIcon = () => (
  <svg width="20" height="15" viewBox="0 0 20 15">
    <rect x="0" y="0" width="20" height="15" rx="2" fill="#0a70e0" />
    <path d="M3 3h2v2H3zM7 3h2v2H7zM11 3h2v2h-2zM15 3h2v2h-2zM3 7h2v2H3zM7 7h2v2H7zM11 7h2v2h-2zM15 7h2v2h-2zM5 11h10v1.500H5z" fill="#fff" />
  </svg>
)

const ShirtIcon = () => (
  <svg width="20" height="18" viewBox="0 0 20 18">
    <path d="M6 0c1 2 7 2 8 0l6 3-2 5-2-1v11H4V7L2 8 0 3z" fill="#0a70e0" />
  </svg>
)

const GridIcon = () => (
  <svg width="18" height="18" viewBox="0 0 18 18">
    <rect x="0" y="0" width="8" height="8" rx="2.500" fill="#7a6de0" />
    <rect x="10" y="0" width="8" height="8" rx="2.500" fill="#7a6de0" />
    <rect x="0" y="10" width="8" height="8" rx="2.500" fill="#a06ac8" />
    <rect x="10" y="10" width="8" height="8" rx="2.500" fill="#b05ab0" />
  </svg>
)

/* content */

const RED = '#ff0000'
const BLUE = '#0c40dc'
const BLACK = '#0a0a0a'

const menuItems = ['文件(F)', '编辑(E)', '查看(V)', '项目(P)', '操作(O)', '工具(T)', '窗口(W)', '帮助(H)']

const tabs = [
  { label: '训练界面', width: 81 },
  { label: '数据实时显示', width: 118, active: true, nudge: 6 },
  { label: '训练数据回看', width: 110, nudge: 3 },
  { label: '离线数据查看', width: 113 },
]

interface ReadoutProps {
  label: string
  value: string
  color: string
  width: number
  after?: number
}

const Readout = ({ label, value, color, width, after }: ReadoutProps) => (
  <Field $width={width} $after={after}>
    <FieldLabel>{label}</FieldLabel>
    <FieldFrame>
      <FieldValue $color={color}>{value}</FieldValue>
    </FieldFrame>
  </Field>
)

const App = () => {
  return (
    <Screen>
      <GlobalStyle />
      <TitleBar>
        <TitleLogo />
        <TitleText>Strain - Continuous Input.vi</TitleText>
        <WindowButtons>
          <WindowButton><MinimizeIcon /></WindowButton>
          <WindowButton><RestoreIcon /></WindowButton>
          <WindowButton><CloseIcon /></WindowButton>
        </WindowButtons>
      </TitleBar>
      <MenuBar>
        {menuItems.map(item => (
          <MenuItem key={item}>{item}</MenuItem>
        ))}
      </MenuBar>
      <ToolBar>
        <RunArrow />
        <RepeatArrow />
        <StopButton />
        <PauseButton />
        <HelpIcon />
      </ToolBar>
      <ForceBox>
        <ForceFrame>
          <ForceChart />
          <ForceText>FORCE</ForceText>
        </ForceFrame>
      </ForceBox>
      <Workspace>
        <FrontPanel>
          <MainTitle>铅球测力台测量分析系统</MainTitle>
          <TabStrip>
            {tabs.map(tab => (
              <Tab key={tab.label} $active={tab.active} $width={tab.width} $nudge={tab.nudge}>{tab.label}</Tab>
            ))}
          </TabStrip>
          <TabPane>
            <LeftColumn>
              <SectionHeading $left={340} $top={44}>六分量力和力矩</SectionHeading>
              <GroupPanel $left={50} $top={36} $width={702} $height={201} $pad={0}>
                <FieldRow $left={66}>
                  <Readout label="Y" value="-241.839" color={RED} width={190} after={15} />
                  <Readout label="X" value="0.0336571" color={BLUE} width={189} after={15} />
                  <Readout label="Z" value="-27.1692" color={BLACK} width={189} />
                </FieldRow>
                <FieldRow $left={66}>
                  <Readout label="MY" value="-10.0271" color={RED} width={189} after={17} />
                  <Readout label="MX" value="61.1749" color={BLUE} width={189} after={17} />
                  <Readout label="MZ" value="83.6216" color={BLACK} width={189} />
                </FieldRow>
              </GroupPanel>
              <SectionHeading $left={215} $top={29} $bold>重心轨迹</SectionHeading>
              <GroupPanel $left={50} $top={15} $width={468} $height={109} $pad={9}>
                <FieldRow $left={24}>
                  <Readout label="Lx" value="-345.8" color={RED} width={131} after={25} />
                  <Readout label="Lz" value="2.5E+2" color={RED} width={151} after={15} />
                  <Readout label="StepL" value="1E+3" color={RED} width={105} />
                </FieldRow>
              </GroupPanel>
              <SectionHeading $left={324} $top={5} $bold>合力及力角数据</SectionHeading>
              <GroupPanel $left={47} $top={16} $width={625} $height={202} $pad={1}>
                <FieldRow $left={100}>
                  <Readout label="Fxyz" value="243.36" color={RED} width={185} after={81} />
                  <Readout label="Fxz" value="27.1692" color={RED} width={186} />
                </FieldRow>
                <FieldRow $left={12} $gap={24}>
                  <Readout label="A" value="83.59" color={RED} width={131} />
                  <Readout label="αx" value="-89.929" color={RED} width={131} />
                  <Readout label="αy" value="-0.0709778" color={RED} width={131} />
                  <Readout label="αz" value="83.59" color={RED} width={131} />
                </FieldRow>
              </GroupPanel>
            </LeftColumn>
            <RightColumn>
              <SectionHeading $left={294} $top={44}>六分量力和力矩 实时曲线</SectionHeading>
              <ChartRow>
                <GraphFrame>
                  <Graph />
                </GraphFrame>
                <Legend>
                  {legendItems.map(item => (
                    <LegendRow key={item.name}>
                      {item.name}
                      <LegendSwatch viewBox="0 0 33 23">
                        <path d="M1 20L11 3l10 17 11-17" fill="none" stroke={item.color} strokeWidth={item.width} />
                      </LegendSwatch>
                    </LegendRow>
                  ))}
                </Legend>
              </ChartRow>
            </RightColumn>
          </TabPane>
        </FrontPanel>
        <ScrollColumn>
          <ScrollThumb />
        </ScrollColumn>
      </Workspace>
      <StatusBar>
        <PathBox>BTB.lvproj/我的电脑</PathBox>
        <ProgressLine />
      </StatusBar>
      <Taskbar>
        <Weather>
          <Sun />
          <WeatherText>
            27°C
            <span>晴朗</span>
          </WeatherText>
        </Weather>
        <Dock>
          <DockItem><WindowsLogo /></DockItem>
          <DockItem><SearchGlass /></DockItem>
          <DockItem><TaskView /></DockItem>
          <DockItem><FolderIcon /><DockMark /></DockItem>
          <DockItem><EdgeIcon /><DockMark /></DockItem>
          <DockItem><ExcelIcon /><DockMark /></DockItem>
          <DockItem><WordIcon /><DockMark /></DockItem>
          <DockItem $tint="#fce8ea"><WechatIcon /><DockMark $color="#d02020" /></DockItem>
          <DockItem><XArrowIcon /><DockMark /></DockItem>
          <DockItem $tint="#e8eaf2"><LabviewIcon /><DockMark $color="#7763b2" $wide /></DockItem>
        </Dock>
        <Tray>
          <TrayItem $width={28}><ChevronUp /></TrayItem>
          <TrayItem $width={30}><CaseIcon /></TrayItem>
          <TrayItem $width={42}><TrayLang>英</TrayLang></TrayItem>
          <TrayItem $width={34} $before={10}><SogouMark $size={20}><span>S</span></SogouMark></TrayItem>
          <TrayItem $width={38} $before={11}><GlobeBlocked /></TrayItem>
          <TrayItem $width={20}><MutedSpeaker /></TrayItem>
          <TrayItem $width={42}><BatteryIcon /></TrayItem>
          <Clock>
            <span>15:12</span>
            <span>2022/8/16</span>
          </Clock>
          <Badge>3</Badge>
        </Tray>
      </Taskbar>
      <ImeBar>
        <SogouMark $size={36}><span>S</span></SogouMark>
        <ImeStrip>
          <ImeSlot $width={34}>英</ImeSlot>
          <ImeSlot $width={30}>•,</ImeSlot>
          <ImeSlot $width={28}><MicIcon /></ImeSlot>
          <ImeSlot $width={33}><KeyboardIcon /></ImeSlot>
          <ImeSlot $width={28}><ShirtIcon /></ImeSlot>
          <ImeSlot $width={28}><GridIcon /></ImeSlot>
        </ImeStrip>
      </ImeBar>
    </Screen>
  )
}

export default App
